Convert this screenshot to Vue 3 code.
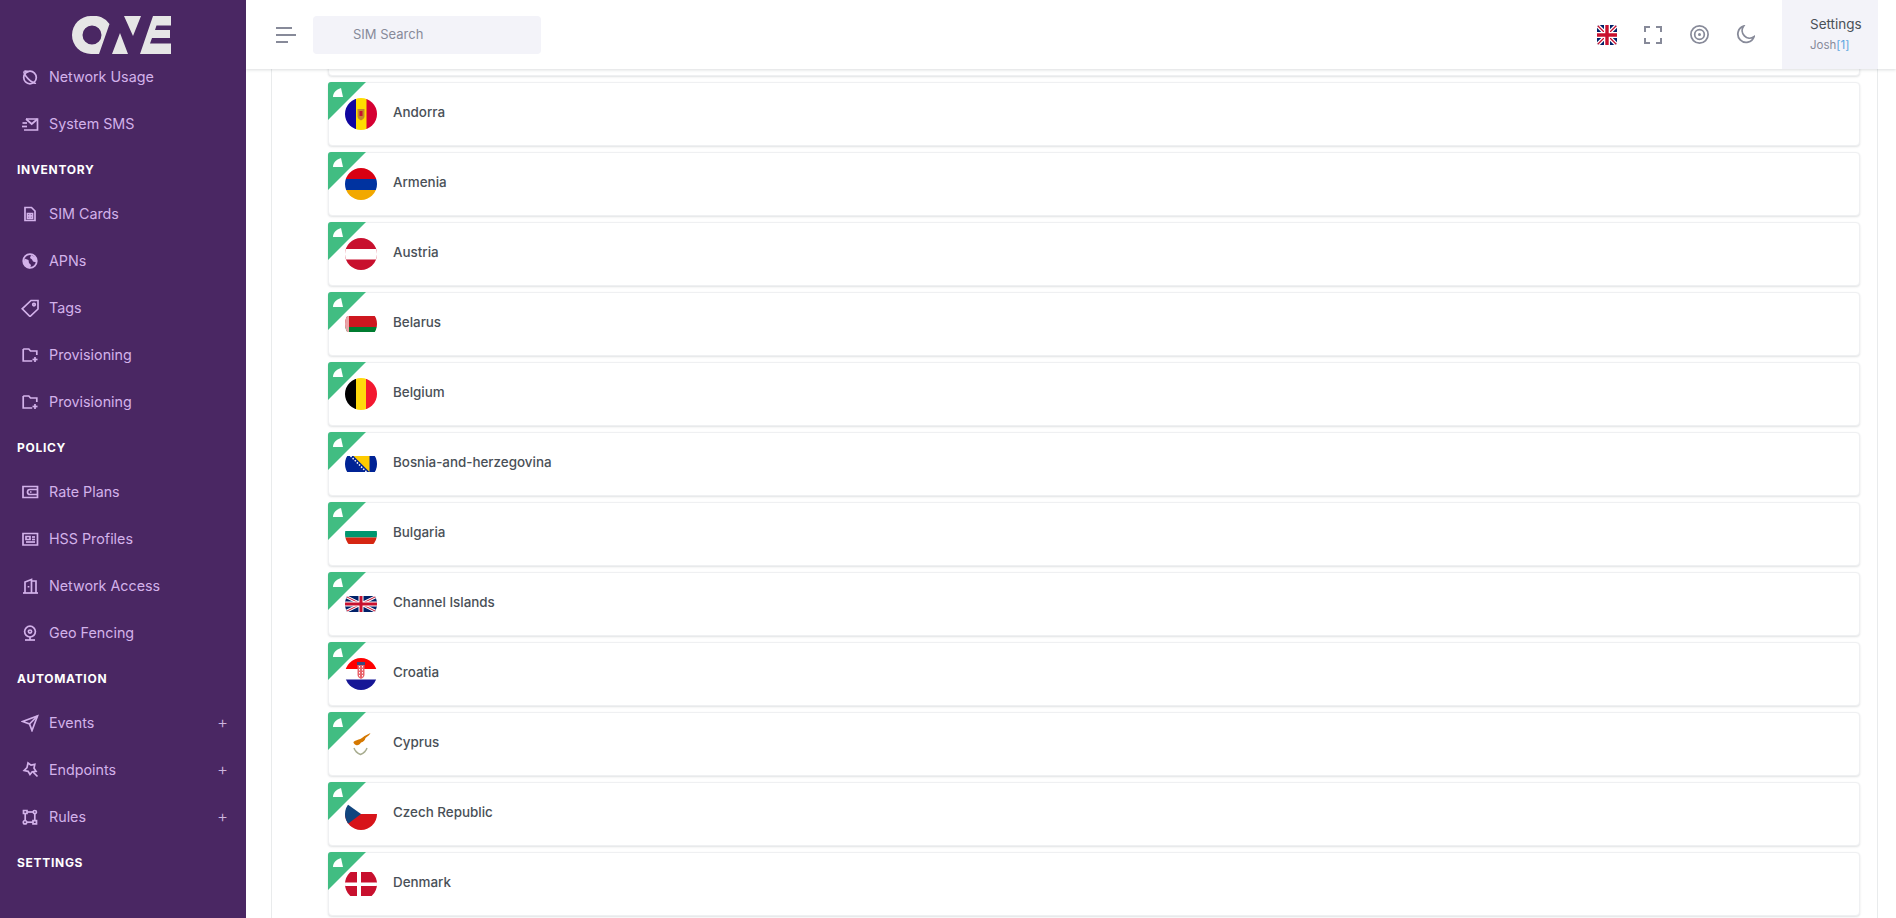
<script setup>
const icons = {
  usage: ['M9 3.2a6.3 6.3 0 1 1 0 12.6a6.3 6.3 0 0 1 0-12.6Z', 'M3.2 3.6c-.9.9 1 4.2 4 7.2s6.5 5 7.5 4', 'M3.2 3.6c1-.8 2.6-.4 4.3.4'],
  sms: ['M5 4h11.5v11H3', 'M5 4l5.7 5L16.5 4', 'M1.5 8H6', 'M1 11.5H6'],
  sim: ['M4 2.5h6.5L14 6v9.5H4Z', 'M6.5 8.5h5v4.8h-5Z', 'M6.5 10.9h5', 'M9 8.5v4.8'],
  tag: ['M10 1.500h7v8.500L9 17.500L1.200 9.800Z', 'M13 4.300a1.300 1.300 0 1 1 0 2.600a1.300 1.300 0 0 1 0-2.600Z'],
  folder: ['M2.200 3h5.600l1.700 2h6.300v4', 'M2.200 3v12h9', 'M14 11v5', 'M11.500 13.500h5'],
  wallet: ['M2 3.500h14.500v11H2Z', 'M16.500 6.500H9a2.500 2.500 0 0 0 0 5h7.500', 'M9 9h1.500'],
  profile: ['M2 3.500h14.500v11.500H2Z', 'M5 6.500h4v3H5Z', 'M11 7h3', 'M11 9.500h3', 'M5 12h9'],
  door: ['M2 16h15', 'M4 16V5l6.500-2.500V16', 'M10.500 4h4.500v12', 'M7.500 9v1.500'],
  geo: ['M9 2.200a5.400 5.400 0 1 1 0 10.800a5.400 5.400 0 0 1 0-10.800Z', 'M9 6a1.600 1.600 0 1 1 0 3.200A1.600 1.600 0 0 1 9 6Z', 'M4 16h10', 'M9 13v3'],
  send: ['M1.500 7.500L16.500 2L11 16.500L8.500 10Z', 'M8.500 10L16.500 2'],
  magic: ['M7 2l3 2.200l3.800-.9l-.8 3.900l2 3.200l-3.800.4L9 13.500l-1.900-3.200l-3.900-.8l2.800-2.800Z', 'M12 11l4.500 4.500'],
  rules: ['M2.500 2.500h3.500v3H2.500Z', 'M6 4h6', 'M13.800 2.500a1.600 1.600 0 1 1 0 3.200a1.600 1.600 0 0 1 0-3.200Z', 'M13.800 5.700v6.800', 'M4 12.500a1.700 1.700 0 1 1 0 3.400a1.700 1.700 0 0 1 0-3.400Z', 'M5.700 14.200h6.300', 'M12 12.600h3.500v3.200H12Z', 'M4.200 5.500v7']
}

const nav = [
  { label: 'Network Usage', icon: 'usage' },
  { label: 'System SMS', icon: 'sms' },
  { section: 'INVENTORY' },
  { label: 'SIM Cards', icon: 'sim' },
  { label: 'APNs', icon: 'globe' },
  { label: 'Tags', icon: 'tag' },
  { label: 'Provisioning', icon: 'folder' },
  { label: 'Provisioning', icon: 'folder' },
  { section: 'POLICY' },
  { label: 'Rate Plans', icon: 'wallet' },
  { label: 'HSS Profiles', icon: 'profile' },
  { label: 'Network Access', icon: 'door' },
  { label: 'Geo Fencing', icon: 'geo' },
  { section: 'AUTOMATION' },
  { label: 'Events', icon: 'send', more: true },
  { label: 'Endpoints', icon: 'magic', more: true },
  { label: 'Rules', icon: 'rules', more: true },
  { section: 'SETTINGS' }
]

const countries = [
  { name: 'Andorra', flag: 'ad' },
  { name: 'Armenia', flag: 'am' },
  { name: 'Austria', flag: 'at' },
  { name: 'Belarus', flag: 'by' },
  { name: 'Belgium', flag: 'be' },
  { name: 'Bosnia-and-herzegovina', flag: 'ba' },
  { name: 'Bulgaria', flag: 'bg' },
  { name: 'Channel Islands', flag: 'gb' },
  { name: 'Croatia', flag: 'hr' },
  { name: 'Cyprus', flag: 'cy' },
  { name: 'Czech Republic', flag: 'cz' },
  { name: 'Denmark', flag: 'dk' }
]
</script>

<template>
  <div class="app">
    <aside class="sidebar">
      <div class="logo">
        <svg width="100" height="38" viewBox="72 16 100 38" fill="#e6e6e6">
          <path fill-rule="evenodd" d="M91 16a19 19 0 0 1 18.500 8L99 54h-8a19 19 0 0 1 0-38Zm1 9.500a9.500 9.500 0 1 0 0 19a9.500 9.500 0 0 0 0-19Z" />
          <path d="M124 16h17l-8 20ZM120 33l8 21h-16ZM153 16h18v9.500h-14.500l-1.500 4.500h15v8h-18l-2 5.500h21V54h-31Z" />
        </svg>
      </div>
      <nav class="nav">
        <template v-for="(item, i) in nav" :key="i">
          <div v-if="item.section" class="section">{{ item.section }}</div>
          <div v-else class="item">
            <svg v-if="item.icon === 'globe'" class="nav-icon" viewBox="0 0 18 18">
              <circle cx="9" cy="9" r="6.800" fill="none" stroke="currentColor" stroke-width="1.700" />
              <path d="M3.500 6.500l4 1.500l.5 3l2 2l-1 3.500c-3-.2-6-3-6.300-6ZM10 3l5 2.500l.5 5l-3.500-1l-1-2l-2-1.500Z" fill="currentColor" />
            </svg>
            <svg v-else class="nav-icon" viewBox="0 0 18 18" fill="none" stroke="currentColor" stroke-width="1.700">
              <path v-for="d in icons[item.icon]" :key="d" :d="d" />
            </svg>
            <span class="label">{{ item.label }}</span>
            <span v-if="item.more" class="more">+</span>
          </div>
        </template>
      </nav>
    </aside>

    <div class="main">
      <header class="topbar">
        <div class="burger"><i class="b1"></i><i class="b2"></i><i class="b3"></i></div>
        <div class="search">SIM Search</div>
        <div class="tools">
          <svg class="uk" viewBox="0 0 20 20">
            <rect width="20" height="20" fill="#012169" />
            <path d="M0 0L20 20M20 0L0 20" stroke="#fff" stroke-width="4" />
            <path d="M0 0L20 20M20 0L0 20" stroke="#c8102e" stroke-width="1.300" />
            <path d="M10 0V20M0 10H20" stroke="#fff" stroke-width="6" />
            <path d="M10 0V20M0 10H20" stroke="#c8102e" stroke-width="3.400" />
          </svg>
          <svg class="tool-full" viewBox="0 0 18 18" fill="none" stroke="#878a99" stroke-width="2">
            <path d="M1 6V1h5M12 1h5v5M17 12v5h-5M6 17H1v-5" />
          </svg>
          <svg class="tool" viewBox="0 0 19 19" fill="none" stroke="#878a99" stroke-width="1.700">
            <circle cx="9.500" cy="9.500" r="8.600" />
            <circle cx="9.500" cy="9.500" r="4.800" />
            <circle cx="9.500" cy="9.500" r="1.500" fill="#878a99" stroke="none" />
          </svg>
          <svg class="tool" viewBox="0 0 19 19" fill="none" stroke="#878a99" stroke-width="1.800">
            <path d="M7.500 1.200A8.300 8.300 0 1 0 18 11.800A7.600 7.600 0 0 1 7.500 1.200Z" />
          </svg>
        </div>
        <div class="user">
          <div class="user-title">Settings</div>
          <div class="user-sub">Josh<span class="count">[1]</span></div>
        </div>
      </header>

      <div class="content">
        <div class="panel">
          <div class="list">
            <div class="card"></div>
            <div v-for="c in countries" :key="c.name" class="card">
              <svg class="ribbon" width="38" height="38" viewBox="0 0 38 38">
                <path d="M3 0H38L0 38V3A3 3 0 0 1 3 0Z" fill="#41bd82" />
                <path d="M5 15C5 11 8 7.500 13 6L15 15Z" fill="#fff" />
              </svg>
              <div class="flag">
                <svg viewBox="0 0 32 32" width="32" height="32">
                  <g v-if="c.flag === 'ad'">
                    <rect width="11" height="32" fill="#10069f" />
                    <rect x="11" width="11" height="32" fill="#fedd00" />
                    <rect x="21.500" width="10.500" height="32" fill="#d50032" />
                    <path d="M12.500 11h7v7.500c0 2-2 3-3.500 4c-1.500-1-3.500-2-3.500-4Z" fill="#c7862a" />
                    <path d="M14.500 13h3v5h-3Z" fill="#c8102e" />
                  </g>
                  <g v-else-if="c.flag === 'am'">
                    <rect width="32" height="11" fill="#d90012" />
                    <rect y="11" width="32" height="11" fill="#0033a0" />
                    <rect y="22" width="32" height="10" fill="#f2a800" />
                  </g>
                  <g v-else-if="c.flag === 'at'">
                    <rect width="32" height="32" fill="#c8102e" />
                    <rect y="11" width="32" height="10.500" fill="#fff" />
                  </g>
                  <g v-else-if="c.flag === 'by'">
                    <rect width="32" height="11" y="8" fill="#ce1720" />
                    <rect width="32" height="5" y="19" fill="#007c30" />
                    <rect width="4" height="16" y="8" fill="#e8a4a8" />
                  </g>
                  <g v-else-if="c.flag === 'be'">
                    <rect width="11" height="32" fill="#000" />
                    <rect x="11" width="11" height="32" fill="#ffd90c" />
                    <rect x="21" width="11" height="32" fill="#f31830" />
                  </g>
                  <g v-else-if="c.flag === 'ba'">
                    <rect y="8" width="32" height="16" fill="#002395" />
                    <path d="M8.500 8H24.500V24Z" fill="#fecb00" />
                    <path d="M5.500 8L21.500 24" stroke="#fff" stroke-width="1.500" stroke-dasharray="1.500 1.500" />
                  </g>
                  <g v-else-if="c.flag === 'bg'">
                    <rect y="6" width="32" height="7" fill="#fff" />
                    <rect y="13" width="32" height="6.500" fill="#00966e" />
                    <rect y="19.500" width="32" height="6.500" fill="#d62612" />
                  </g>
                  <g v-else-if="c.flag === 'gb'">
                    <rect y="8" width="32" height="16" fill="#012169" />
                    <path d="M0 8L32 24M32 8L0 24" stroke="#fff" stroke-width="3" />
                    <path d="M0 8L32 24M32 8L0 24" stroke="#c8102e" stroke-width="1" />
                    <path d="M16 8V24M0 16H32" stroke="#fff" stroke-width="5" />
                    <path d="M16 8V24M0 16H32" stroke="#c8102e" stroke-width="3" />
                  </g>
                  <g v-else-if="c.flag === 'hr'">
                    <rect width="32" height="11" fill="#f00" />
                    <rect y="11" width="32" height="10.500" fill="#fff" />
                    <rect y="21.500" width="32" height="10.500" fill="#171796" />
                    <path d="M12 4h8v3h-8Z" fill="#3a4a80" />
                    <path d="M12.500 7h7v10c0 2-2 3-3.500 4c-1.500-1-3.500-2-3.500-4Z" fill="#e8636b" />
                    <path d="M14.500 8v11M17.500 8v11" stroke="#fff" stroke-width="1" stroke-dasharray="1.500 1.500" />
                  </g>
                  <g v-else-if="c.flag === 'cy'">
                    <rect width="32" height="32" fill="#fff" />
                    <path d="M8.500 14c1.500-1.500 3.500-2 5-2.500c2.500-.5 4.500-2.500 6-3.500l6-3c-1 2-3 3.500-5 5c-.5 2.500-2.500 4-4.500 4.500c-1 2-3.500 3.500-5 2.500c-1.500-.5-2.500-2-2.500-2.500Z" fill="#d57800" />
                    <path d="M9 20c1 3 4 5.500 6.500 6.500c2.500-1 5.500-3.500 6.500-6.500" fill="none" stroke="#a8ad90" stroke-width="1.500" />
                  </g>
                  <g v-else-if="c.flag === 'cz'">
                    <rect width="32" height="16" fill="#fff" />
                    <rect y="16" width="32" height="16" fill="#d7141a" />
                    <path d="M0 4.500L16 16L0 28Z" fill="#11457e" />
                  </g>
                  <g v-else-if="c.flag === 'dk'">
                    <rect y="4" width="32" height="24" fill="#c8102e" />
                    <rect x="12" y="4" width="4" height="24" fill="#fff" />
                    <rect y="14.500" width="32" height="3.500" fill="#fff" />
                  </g>
                </svg>
              </div>
              <span class="name">{{ c.name }}</span>
            </div>
          </div>
        </div>
      </div>
    </div>
  </div>
</template>

<style>
html, body { margin: 0; height: 918px; overflow: hidden; background: #fff; }
</style>

<style scoped>
.app {
  display: flex;
  height: 918px;
  overflow: hidden;
  font-family: Inter, "Noto Sans", sans-serif;
}
.sidebar {
  width: 246px;
  flex: none;
  background: #4a2763;
  display: flex;
  flex-direction: column;
  overflow: hidden;
}
.logo {
  height: 54px;
  padding-top: 16px;
  padding-left: 72px;
  box-sizing: border-box;
}
.logo svg { display: block; }
.nav { display: flex; flex-direction: column; }
.item {
  height: 47px;
  flex: none;
  box-sizing: border-box;
  display: flex;
  align-items: center;
  padding: 0 18px 2px 21px;
  color: #d3b2ea;
  font-size: 14.300px;
}
.nav-icon { width: 18px; height: 18px; flex: none; margin-right: 10px; }
.label { flex: 1; }
.more { font-size: 17px; font-weight: 300; line-height: 1; color: #cdb6de; }
.section {
  height: 43px;
  flex: none;
  display: flex;
  align-items: center;
  padding-left: 17px;
  color: #fff;
  font-size: 12px;
  font-weight: 700;
  letter-spacing: 0.7px;
}
.main { flex: 1; min-width: 0; display: flex; flex-direction: column; }
.topbar {
  position: relative;
  z-index: 2;
  height: 69px;
  flex: none;
  display: flex;
  align-items: center;
  background: #fff;
  box-shadow: 0 1px 3px rgba(56, 65, 74, 0.18);
  padding-left: 30px;
  padding-right: 18px;
}
.burger { width: 20px; display: flex; flex-direction: column; gap: 5px; margin-right: 17px; }
.burger i { display: block; height: 2px; background: #878a99; }
.b1 { width: 16px; }
.b2 { width: 20px; }
.b3 { width: 12px; }
.search {
  width: 228px;
  height: 38px;
  box-sizing: border-box;
  padding-left: 40px;
  line-height: 37px;
  background: #f3f3f9;
  border-radius: 4px;
  color: #878a99;
  font-size: 13px;
}
.tools { margin-left: auto; display: flex; align-items: center; gap: 27.500px; margin-right: 27px; }
.uk { width: 20px; height: 20px; border-radius: 3px; display: block; margin-top: 1px; }
.tool { width: 19px; height: 19px; display: block; }
.tool-full { width: 18px; height: 18px; display: block; }
.user {
  width: 96px;
  height: 69px;
  box-sizing: border-box;
  background: #f3f3f9;
  padding: 15px 0 0 28px;
}
.user-title { font-size: 13.500px; line-height: 18px; color: #495057; }
.user-sub { font-size: 11.500px; line-height: 14px; margin-top: 5px; color: #878a99; }
.count { color: #5aa5e0; }
.content { flex: 1; min-height: 0; overflow: hidden; display: flex; }
.panel {
  flex: 1;
  margin: 0 18px 0 25px;
  border: solid #e9ebec;
  border-width: 0 1px;
  padding: 0 17px 0 56px;
  box-sizing: border-box;
  min-width: 0;
}
.list { margin-top: -57px; display: flex; flex-direction: column; gap: 6px; }
.card {
  position: relative;
  height: 64px;
  flex: none;
  box-sizing: border-box;
  display: flex;
  align-items: center;
  padding-left: 16px;
  background: #fff;
  border: 1px solid #eff0f2;
  border-radius: 4px;
  box-shadow: 0 1px 2px rgba(56, 65, 74, 0.15);
}
.ribbon { position: absolute; left: -1px; top: -1px; }
.flag { width: 32px; height: 32px; flex: none; overflow: hidden; border-radius: 50%; margin-right: 16px; }
.flag svg { display: block; }
.name { color: #495057; font-size: 13.400px; font-weight: 500; margin-bottom: 4px; }
</style>
